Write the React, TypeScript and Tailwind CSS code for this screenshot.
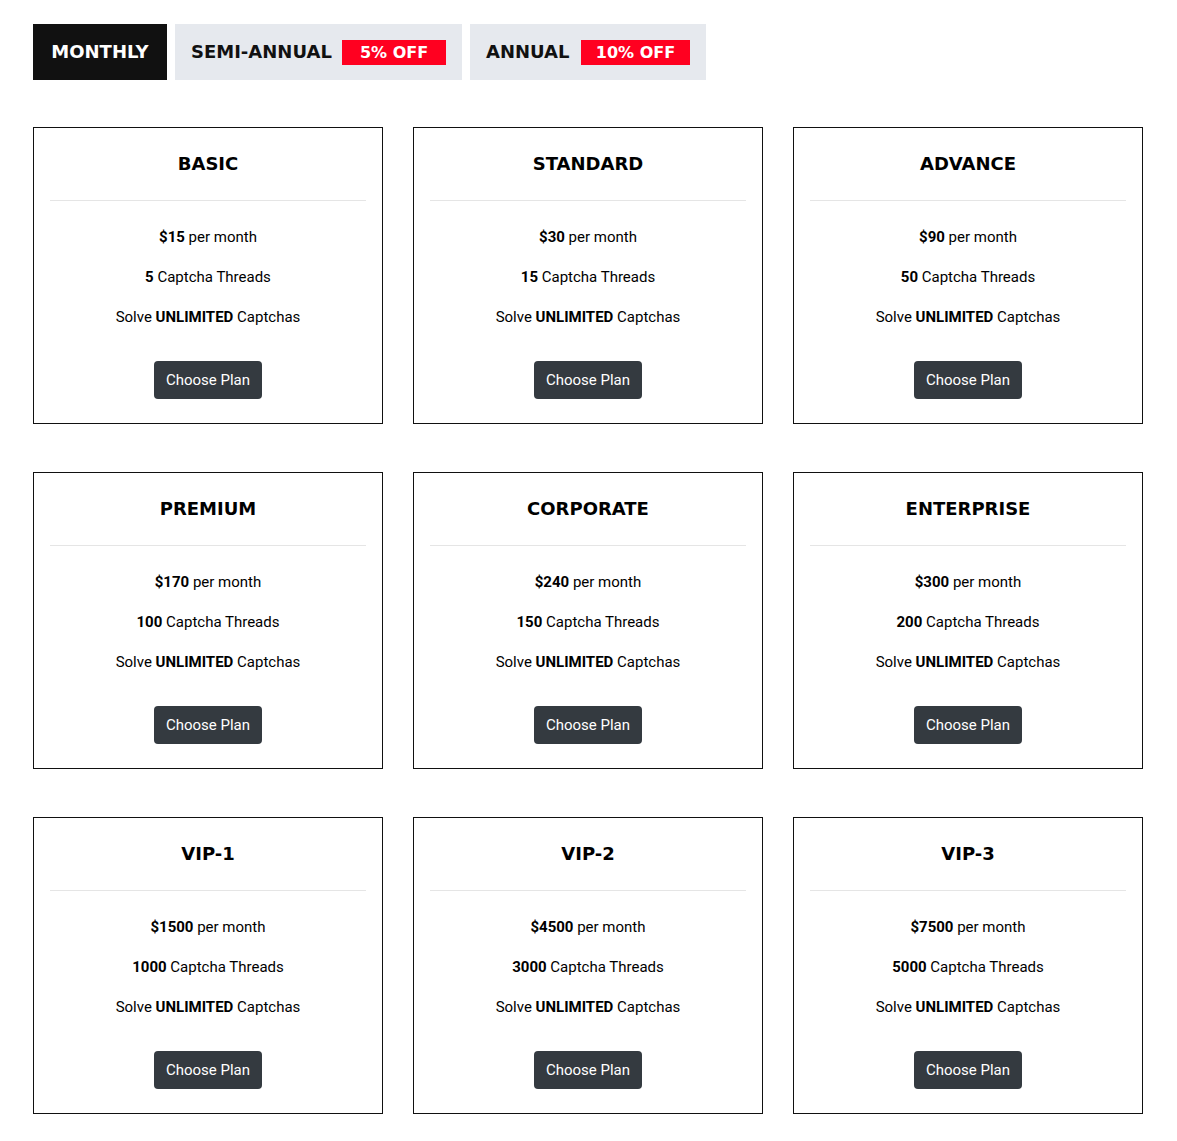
interface Plan {
  name: string;
  price: number;
  threads: number;
}

const periods = [
  { label: "MONTHLY", discount: "", width: "min-w-[134px]", badge: "" },
  {
    label: "SEMI-ANNUAL",
    discount: "5% OFF",
    width: "min-w-[287px]",
    badge: "w-[104px]",
  },
  {
    label: "ANNUAL",
    discount: "10% OFF",
    width: "min-w-[236px]",
    badge: "w-[109px]",
  },
];

const plans: Plan[] = [
  { name: "BASIC", price: 15, threads: 5 },
  { name: "STANDARD", price: 30, threads: 15 },
  { name: "ADVANCE", price: 90, threads: 50 },
  { name: "PREMIUM", price: 170, threads: 100 },
  { name: "CORPORATE", price: 240, threads: 150 },
  { name: "ENTERPRISE", price: 300, threads: 200 },
  { name: "VIP-1", price: 1500, threads: 1000 },
  { name: "VIP-2", price: 4500, threads: 3000 },
  { name: "VIP-3", price: 7500, threads: 5000 },
];

const PlanCard = ({ name, price, threads }: Plan) => {
  return (
    <div className="flex flex-col items-center border border-[#111] px-4 py-6 text-center">
      <h2 className="font-['DejaVu_Sans',sans-serif] text-lg leading-6 font-bold">
        {name}
      </h2>
      <hr className="my-6 w-full border-[#e5e5e5]" />
      <div className="flex flex-col gap-4">
        <p>
          <strong>${price}</strong> per month
        </p>
        <p>
          <strong>{threads}</strong> Captcha Threads
        </p>
        <p>
          Solve <strong>UNLIMITED</strong> Captchas
        </p>
      </div>
      <button
        type="button"
        className="mt-8 rounded bg-[#343a40] px-3 py-[7px] text-white"
      >
        Choose Plan
      </button>
    </div>
  );
};

const App = () => {
  return (
    <main className="bg-white pt-6 pr-[34px] pb-7 pl-[33px] font-[Roboto,sans-serif] text-[15px] leading-6 text-black">
      <div className="flex flex-wrap gap-2 font-['DejaVu_Sans',sans-serif] text-lg leading-6 font-bold">
        {periods.map(({ label, discount, width, badge }, index) => (
          <button
            key={label}
            type="button"
            aria-pressed={index === 0}
            className={`flex h-14 items-center px-4 ${width} ${
              discount ? "justify-between" : "justify-center"
            } ${
              index === 0 ? "bg-[#111] text-white" : "bg-[#e6e9ee] text-[#111]"
            }`}
          >
            {label}
            {discount && (
              <span
                className={`bg-[#ff0020] text-base leading-[25px] text-white ${badge}`}
              >
                {discount}
              </span>
            )}
          </button>
        ))}
      </div>
      <div className="mt-[47px] grid grid-cols-3 gap-x-[30px] gap-y-12">
        {plans.map((plan) => (
          <PlanCard key={plan.name} {...plan} />
        ))}
      </div>
    </main>
  );
};

export default App;
